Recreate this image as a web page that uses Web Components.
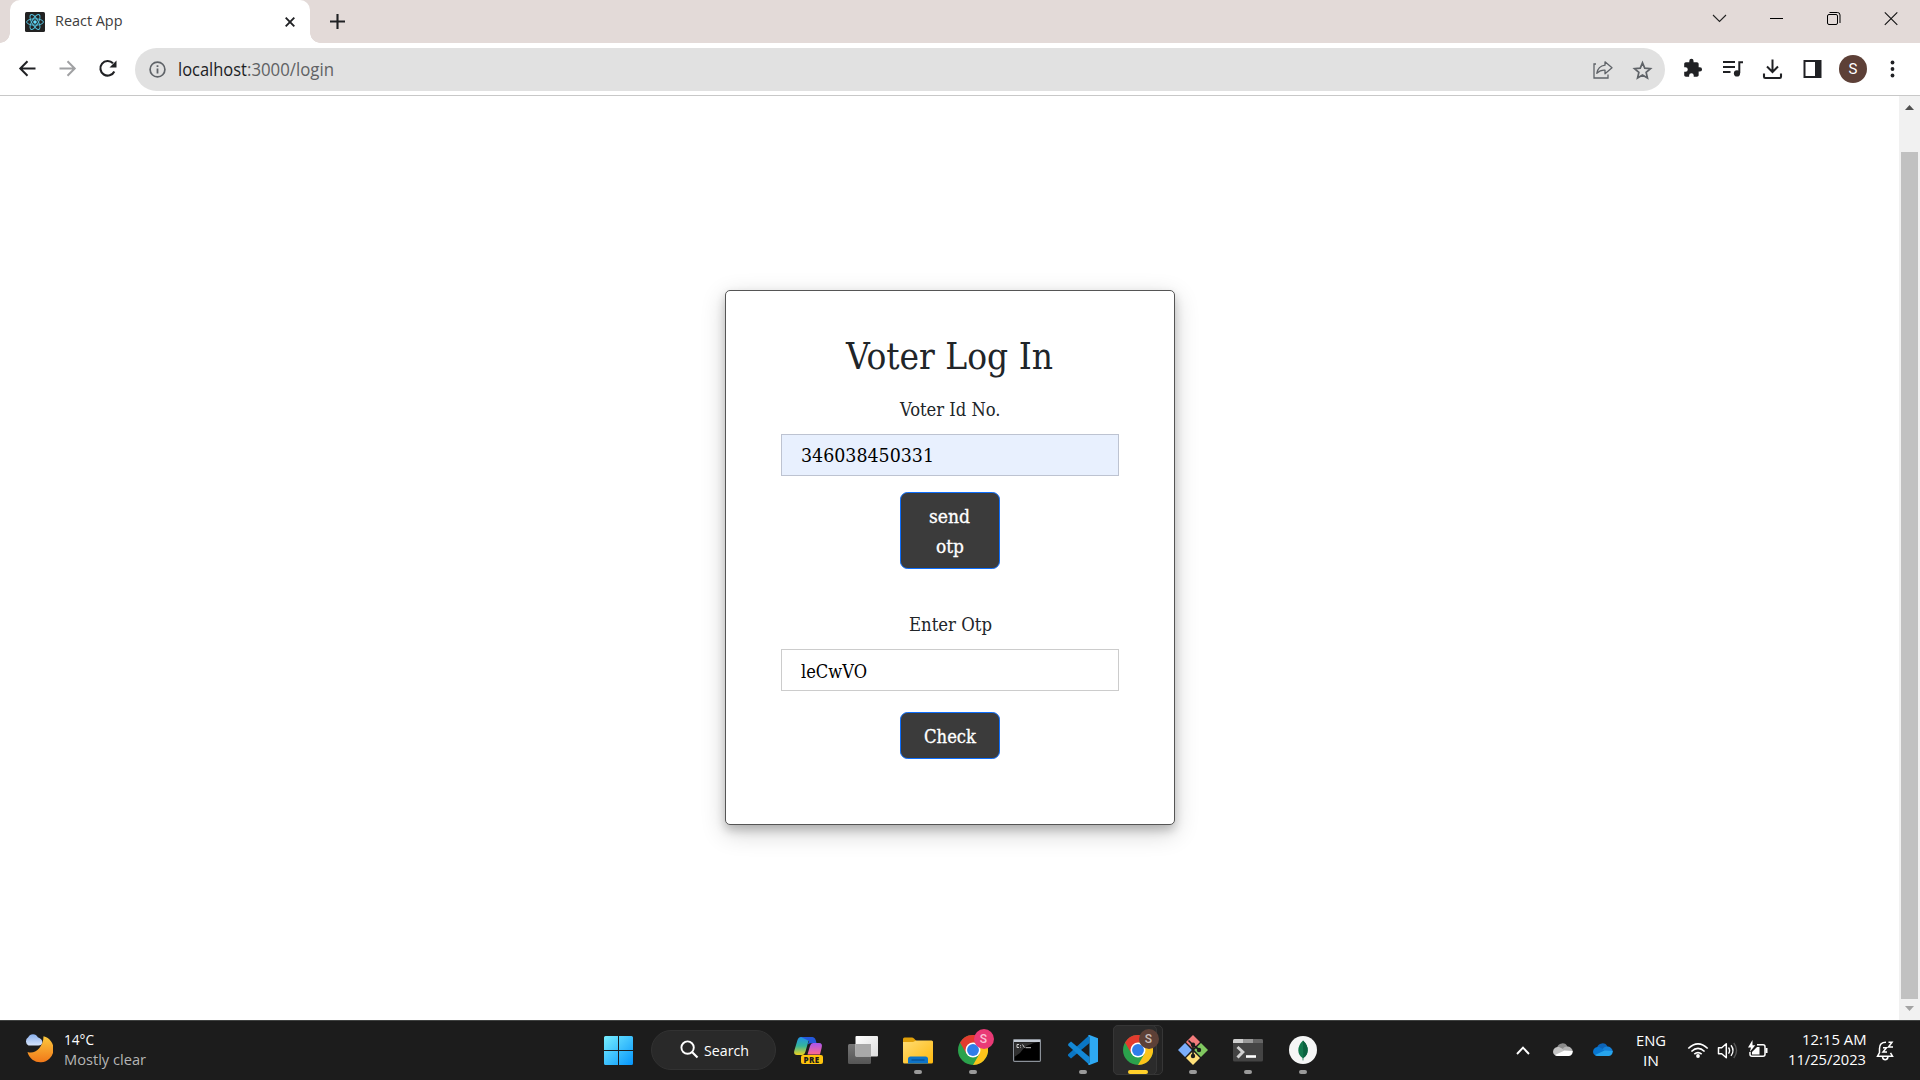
<!DOCTYPE html>
<html lang="en">
<head>
<meta charset="utf-8">
<title>React App</title>
<style>
html,body{margin:0;height:100%;overflow:hidden;background:#fff}
body{font-family:"Open Sans","Noto Sans",sans-serif}
</style>
</head>
<body>
<desktop-screen></desktop-screen>
<script>
const define = (name, html, setup) => {
  const t = document.createElement('template');
  t.innerHTML = html;
  customElements.define(name, class extends HTMLElement {
    constructor() {
      super();
      this.attachShadow({ mode: 'open' }).appendChild(t.content.cloneNode(true));
    }
    connectedCallback() { if (setup) setup(this, this.shadowRoot); }
  });
};

/* Single line of text, condensed or widened to the given width */
define('fit-text', `<style>
:host{display:block;white-space:nowrap;flex:none}
span{display:inline-block;transform-origin:0 50%;white-space:pre}
</style><span><slot></slot></span>`, (el, root) => {
  const w = parseFloat(el.getAttribute('w'));
  el.style.width = w + 'px';
  const s = root.querySelector('span');
  s.style.transform = 'scaleX(' + w / s.getBoundingClientRect().width + ')';
});

define('tab-strip', `<style>
:host{display:flex;height:43px;background:#e3dad8;justify-content:space-between}
.left{display:flex}
.tab{display:flex;align-items:center;box-sizing:border-box;width:300px;margin-left:10px;padding:0 15px;background:#fff;border-radius:10px 10px 0 0;position:relative;font-size:15px;line-height:20px;color:#3c3c3c}
.tab:before,.tab:after{content:"";position:absolute;bottom:0;width:10px;height:10px}
.tab:before{left:-10px;background:radial-gradient(circle at 0 0,transparent 9.5px,#fff 10px)}
.tab:after{right:-10px;background:radial-gradient(circle at 100% 0,transparent 9.5px,#fff 10px)}
.fav{margin-right:10px}
fit-text{margin-top:-3px}
.x{margin-left:auto}
.plus{margin:13px 0 0 19px}
.win{display:flex;align-items:flex-start;margin-right:1px}
svg{display:block;flex:none}
</style>
<div class="left"><div class="tab">
<svg class="fav" width="20" height="20" viewBox="0 0 20 20"><rect width="20" height="20" rx="1.5" fill="#222"/><g fill="none" stroke="#53c1de" stroke-width=".95"><ellipse cx="10" cy="10" rx="8.4" ry="3.2"/><ellipse cx="10" cy="10" rx="8.4" ry="3.2" transform="rotate(60 10 10)"/><ellipse cx="10" cy="10" rx="8.4" ry="3.2" transform="rotate(120 10 10)"/></g><circle cx="10" cy="10" r="1.8" fill="#61dafb"/></svg>
<fit-text w="67.5">React App</fit-text>
<svg class="x" width="10" height="10" viewBox="0 0 10 10"><path d="M.7.7l8.6 8.6M9.3.7L.7 9.3" stroke="#202124" stroke-width="1.9"/></svg>
</div>
<svg class="plus" width="17" height="17" viewBox="0 0 17 17"><path d="M8.5 1v15M1 8.500h15" stroke="#202124" stroke-width="2.1"/></svg></div>
<div class="win">
<svg width="57" height="43" viewBox="0 0 57 43"><path d="M22 15l6.500 6.500L35 15" fill="none" stroke="#222" stroke-width="1.1"/></svg>
<svg width="57" height="43" viewBox="0 0 57 43"><path d="M22 18.500h13" stroke="#000" stroke-width="1"/></svg>
<svg width="57" height="43" viewBox="0 0 57 43"><rect x="22.500" y="14.500" width="10" height="10" rx="1.500" fill="none" stroke="#000"/><path d="M24.500 12.500h8q2.500 0 2.500 2.500v8" fill="none" stroke="#000"/></svg>
<svg width="57" height="43" viewBox="0 0 57 43"><path d="M22.800 12.300l12.500 12.500M35.300 12.300L22.800 24.800" stroke="#111" stroke-width="1.1"/></svg>
</div>`);

define('browser-toolbar', `<style>
:host{display:flex;height:52px;align-items:center;background:#fff;border-bottom:1px solid #c8c8c8}
svg{display:block;flex:none}
.nav{display:flex;width:135px;flex:none;padding-left:7px;box-sizing:border-box}
.box{display:flex;align-items:center;width:1530px;height:43px;border-radius:22px;background:#e1e1e1;box-sizing:border-box;padding:0 2px 0 14px;margin-top:1px}
.url{display:flex;margin-left:12px;font-size:17.5px;line-height:24px;color:#606164;margin-top:-1px}
.host{color:#202124}
.share{margin-left:auto}
.tools{display:flex;align-items:center;margin-left:8px}
.av{width:28px;height:28px;border-radius:50%;background:#5d4037;color:#fff;font:15px/28px Roboto,sans-serif;text-align:center;margin:0 6px 0 7px}
</style>
<div class="nav">
<svg width="40" height="40" viewBox="0 0 40 40"><path d="M28.500 19.500H14M20.500 12.300L13.300 19.500l7.200 7.200" fill="none" stroke="#202124" stroke-width="2"/></svg>
<svg width="40" height="40" viewBox="0 0 40 40"><path d="M12.500 19.500H27M20.500 12.300l7.200 7.200-7.200 7.200" fill="none" stroke="#a0a1a3" stroke-width="2"/></svg>
<svg width="40" height="40" viewBox="0 0 40 40"><path d="M27.300 22.500a7.300 7.300 0 1 1-1.300-8.200" fill="none" stroke="#202124" stroke-width="2.1"/><path d="M29.500 11.500v7h-7z" fill="#202124"/></svg>
</div>
<div class="box">
<svg width="17" height="17" viewBox="0 0 17 17"><circle cx="8.500" cy="8.500" r="7.400" fill="none" stroke="#5f6368" stroke-width="1.7"/><path d="M8.500 7.500v5M8.500 4.300v1.800" stroke="#5f6368" stroke-width="1.8"/></svg>
<div class="url"><fit-text class="host" w="69">localhost</fit-text><fit-text w="87">:3000/login</fit-text></div>
<svg class="share" width="40" height="40" viewBox="0 0 40 40"><g fill="none" stroke="#5f6368" stroke-width="1.300"><path d="M13 14h-2v14h14v-3.500"/><path d="M22 11.800l7 6-7 6v-3.600q-4.500-.4-8.200 3.200 1.200-7.300 8.200-8.200z" stroke-linejoin="round"/></g></svg>
<svg width="40" height="40" viewBox="0 0 40 40"><path d="M19.500 12.800l2.250 5.300 5.750.5-4.370 3.770 1.320 5.620-4.950-3-4.950 3 1.320-5.620-4.370-3.770 5.750-.5z" fill="none" stroke="#5f6368" stroke-width="1.700"/></svg>
</div>
<div class="tools">
<svg width="40" height="40" viewBox="0 0 24 24"><path transform="translate(5.700 5.400) scale(.51)" d="M20.500 11H19V7c0-1.100-.9-2-2-2h-4V3.500a2.500 2.500 0 0 0-5 0V5H4c-1.100 0-2 .9-2 2v3.800h1.500a2.700 2.700 0 0 1 0 5.400H2V20c0 1.100.9 2 2 2h3.800v-1.500a2.700 2.700 0 0 1 5.400 0V22H17c1.100 0 2-.9 2-2v-4h1.500a2.500 2.500 0 0 0 0-5z" fill="#202124"/></svg>
<svg width="40" height="40" viewBox="0 0 40 40"><path d="M10 13h12M10 18h12M10 23h7.500M26.300 24V13.200M25.300 13.300H30" stroke="#202124" stroke-width="2" fill="none"/><circle cx="24" cy="24.400" r="3.100" fill="#202124"/></svg>
<svg width="40" height="40" viewBox="0 0 40 40"><path d="M19.500 10.500v12M14 17.500l5.500 5.500 5.500-5.500" fill="none" stroke="#202124" stroke-width="2"/><path d="M11 24.500v3.200q0 1.300 1.300 1.300h14.400q1.300 0 1.300-1.300v-3.200" fill="none" stroke="#202124" stroke-width="2.100"/></svg>
<svg width="40" height="40" viewBox="0 0 40 40"><path d="M10.500 11h18v18h-18zM12.500 13v14h9.500V13z" fill="#202124" fill-rule="evenodd"/></svg>
<div class="av" style="margin-left:6px">S</div>
<svg width="40" height="40" viewBox="0 0 40 40"><g fill="#202124"><circle cx="19.500" cy="13.500" r="1.900"/><circle cx="19.500" cy="20" r="1.900"/><circle cx="19.500" cy="26.500" r="1.900"/></g></svg>
</div>`);

define('scroll-track', `<style>
:host{display:flex;flex-direction:column;align-items:center;width:21px;background:#f1f1f1;flex:none}
.t{width:17px;height:847px;background:#c1c1c1;margin-top:42px;margin-bottom:7px}
svg{display:block;margin-top:9px}
.t+svg{margin-top:0}
</style><svg width="9" height="5" viewBox="0 0 9 5"><path d="M0 5L4.500 0 9 5z" fill="#505050"/></svg><div class="t"></div><svg width="9" height="5" viewBox="0 0 9 5"><path d="M0 0h9L4.500 5z" fill="#a3a3a3"/></svg>`);

define('form-field', `<style>
:host{display:flex;flex-direction:column;align-items:center;color:#212529;font-size:18px;line-height:30px}
.in{box-sizing:border-box;width:338px;height:42px;border:1px solid #ccc;margin-top:9px;padding-left:19px;line-height:43px;color:#000;background:#fff}
:host([filled]) .in{background:#e8f0fe;border-color:#bdc3d1;line-height:41px}
</style><slot name="label"></slot><div class="in"><slot></slot></div>`);

define('action-button', `<style>
:host{display:flex;flex-direction:column;align-items:center;box-sizing:border-box;width:100px;padding:9px 1px 6px 0;border:1px solid #0d6efd;border-radius:7.500px;background:#3b3b3b;color:#fff;font-size:18px;line-height:30px;font-weight:400;-webkit-text-stroke:.3px #fff}
</style><slot></slot>`);

define('login-card', `<style>
:host{display:flex;flex-direction:column;align-items:center;box-sizing:border-box;width:450px;height:535px;padding-top:42px;border:1px solid #555;border-radius:5px;background:#fff;box-shadow:0 5px 10px rgba(0,0,0,.2),0 7.500px 25px rgba(0,0,0,.19);font-family:"DejaVu Serif Condensed","DejaVu Serif",serif;color:#212529}
.h{font-size:37px;line-height:48px;margin-bottom:14px;padding-right:1px}
.b1{margin:16px 0 41px}
.b2{margin-top:21px}
</style>
<fit-text class="h" w="207">Voter Log In</fit-text>
<form-field filled><fit-text slot="label" w="100.5">Voter Id No.</fit-text><fit-text w="133">346038450331</fit-text></form-field>
<action-button class="b1"><fit-text w="41">send</fit-text><fit-text w="28">otp</fit-text></action-button>
<form-field><fit-text slot="label" w="83">Enter Otp</fit-text><fit-text w="66">leCwVO</fit-text></form-field>
<action-button class="b2"><fit-text w="52">Check</fit-text></action-button>`);

define('page-view', `<style>
:host{display:flex;height:924px;background:#fff}
main{flex:1;display:flex;justify-content:center;align-items:flex-start;padding:194px 0 0 1px}
</style><main><login-card></login-card></main><scroll-track></scroll-track>`);

define('task-item', `<style>
:host{display:flex;flex:none;flex-direction:column;align-items:center;width:55px;height:59px;position:relative}
.i{display:flex;align-items:center;justify-content:center;height:49px;padding-top:5px;box-sizing:border-box;margin-top:2px}
.d{display:none;width:8px;height:4px;border-radius:2px;background:#9a9a9a;margin-top:-2px}
:host([open]) .d{display:block}
:host([active]) .d{display:block;width:20px;background:#ffd02b}
:host([active]) .i,:host([active]) .d{z-index:1}
.bg,.bg2{display:none;position:absolute;top:4px;left:3px;width:44px;height:50px;border-radius:5px;background:#2b2b2b;box-sizing:border-box;border:1px solid #363636}
.bg2{width:50px;background:#242424}
:host([active]) .bg,:host([active]) .bg2{display:block}
.i{position:relative}
.d{position:relative}
</style><div class="bg2"></div><div class="bg"></div><div class="i"><slot></slot></div><div class="d"></div>`);

define('chrome-icon', `<style>
:host{display:block;position:relative;width:30px;height:30px}
svg{display:block}
b{position:absolute;left:16px;top:-6px;width:20px;height:20px;border-radius:50%;background:var(--badge);color:var(--ink);font:500 12px/20px Roboto,sans-serif;text-align:center}
</style><svg width="30" height="30" viewBox="0 0 48 48"><circle cx="24" cy="24" r="24" fill="#2ba24c"/><path d="M24 12h20.800A24 24 0 0 1 24 48l10.400-18z" fill="#fcc41a"/><path d="M3.200 12A24 24 0 0 1 44.800 12H24L13.600 30z" fill="#e33b2e"/><circle cx="24" cy="24" r="12" fill="#fff"/><circle cx="24" cy="24" r="9.500" fill="#2f7de9"/></svg><b>S</b>`);

define('system-tray', `<style>
:host{display:flex;align-items:flex-start;color:#fff;font-size:15px;line-height:20px}
svg{display:block;flex:none}
.c{display:flex;flex-direction:column;margin-top:8px;flex:none}
</style>
<svg width="30" height="59" viewBox="0 0 30 59"><path d="M9 33l6-6.300 6 6.300" fill="none" stroke="#fff" stroke-width="1.900"/></svg>
<svg style="margin-left:8px" width="40" height="59" viewBox="0 0 40 59"><g transform="translate(7 22)"><path d="M4 5a5.500 5.500 0 0 1 10.500-1.300L9 8z" fill="#8b8b8b"/><path d="M0 9a5 5 0 0 1 6-5l8 4-9 5A4.600 4.600 0 0 1 0 9z" fill="#c4c4c4"/><path d="M9.500 6.500Q11 3 15 3.500t5 5.500L16 10z" fill="#b3b3b3"/><path d="M2 12l9.500-4.500 8 .5A4 4 0 0 1 16 13H5q-2 0-3-1z" fill="#fff"/></g></svg>
<svg width="40" height="59" viewBox="0 0 40 59"><g transform="translate(7 22)"><path d="M4 5a5.500 5.500 0 0 1 10.500-1.300L9 8z" fill="#0d64b8"/><path d="M0 9a5 5 0 0 1 6-5l8 4-9 5A4.600 4.600 0 0 1 0 9z" fill="#0876d0"/><path d="M9.500 6.500Q11 3 15 3.500t5 5.500L16 10z" fill="#1581d8"/><path d="M2 12l9.500-4.500 8 .5A4 4 0 0 1 16 13H5q-2 0-3-1z" fill="#27a4ec"/></g></svg>
<div class="c" style="align-items:center;width:30px;margin-left:10px;margin-top:9px"><fit-text w="30">ENG</fit-text><fit-text w="16">IN</fit-text></div>
<svg style="margin-left:21px" width="22" height="59" viewBox="0 0 22 59"><g fill="none" stroke="#fff" stroke-width="1.600"><path d="M1.300 27.500q9.700-9.300 19.400 0M4.400 30.500q6.600-6.200 13.200 0M7.300 33.200q3.700-3.200 7.400 0"/></g><circle cx="11" cy="35" r="1.900" fill="#fff"/></svg>
<svg style="margin-left:8px" width="22" height="59" viewBox="0 0 22 59"><path d="M1.500 26.700h3.200l4.600-4v14l-4.600-4H1.500z" fill="none" stroke="#fff" stroke-width="1.500" stroke-linejoin="round"/><path d="M11.500 26.500q2.200 3 0 6.200M14 24.300q4 5.200 0 10.600" fill="none" stroke="#fff" stroke-width="1.400"/><path d="M16.800 22q5.500 7.500 0 15" fill="none" stroke="#555" stroke-width="1.400"/></svg>
<svg style="margin-left:8px" width="24" height="59" viewBox="0 0 24 59"><path d="M10 23.700h6q2 0 2 2v7.500q0 2-2 2H5q-2 0-2-2V31" fill="none" stroke="#fff" stroke-width="1.500"/><path d="M5 33v-2l5-5h2.500v7.500H5zM18.500 27h2v5h-2zM5.500 19L1 26.500h3L2.800 31 8.300 24.300H5.500z" fill="#fff"/></svg>
<div class="c" style="align-items:flex-end;width:77px;margin-left:18px"><fit-text w="64.5">12:15 AM</fit-text><fit-text w="78">11/25/2023</fit-text></div>
<svg style="margin-left:9px" width="22" height="59" viewBox="0 0 22 59"><path d="M11 21.300q-6.500 0-6.500 6.200v4L2.500 35.300h15l-2-3.500M7.500 36q.5 2.700 2.700 2.700t2.800-2.700" fill="none" stroke="#fff" stroke-width="1.500"/><path d="M8 26.700h3.500L8 31h4M13.500 21.300H17L13.500 26H18" fill="none" stroke="#fff" stroke-width="1.500"/></svg>`);

define('task-bar', `<style>
:host{display:flex;box-sizing:border-box;height:60px;border-top:1px solid #3f4140;background:#1c1c1c;color:#fff;font-size:15px;line-height:20px}
svg{display:block;flex:none}
.w{display:flex;width:591px;flex:none;padding:9px 0 0 23px;box-sizing:border-box}
.wt{display:flex;flex-direction:column;margin:-1px 0 0 11px}
.wt .m{color:#b5b5b5}
.s{display:flex;align-items:center;box-sizing:border-box;width:125px;height:40px;border-radius:20px;background:#292929;border:1px solid #323232;margin:9px 4px 0 5px;padding:0 0 1px 28px;flex:none}
.s fit-text{margin-left:5px}
.pre{position:relative;margin-left:1px}
.pre b{position:absolute;left:7px;top:19px;width:22px;height:9px;border-radius:2px;background:#ffc40c;color:#1c1c1c;font:800 8px/9px "Open Sans",sans-serif;text-align:center;letter-spacing:.4px}
system-tray{margin-left:auto;margin-right:23px}
</style>
<div class="w">
<svg width="30" height="40" viewBox="0 0 30 40"><defs><linearGradient id="m" x2="0" y2="1"><stop stop-color="#fcc93d"/><stop offset="1" stop-color="#f17819"/></linearGradient><linearGradient id="c" x2="0" y2="1"><stop stop-color="#8ab0ed"/><stop offset="1" stop-color="#d7e4fa"/></linearGradient></defs><path d="M20.500 6.300A13.200 13.200 0 1 1 4.500 22Q11 24 16 18.500 20.500 13 20.500 6.300z" fill="url(#m)"/><path d="M5.500 15.500a4.700 4.700 0 0 1-.3-8.200 5.300 5.300 0 0 1 9.600 0q4.500 1.500 4.500 5-.5 3.200-3.800 3.200z" fill="url(#c)"/></svg>
<div class="wt"><fit-text w="30">14°C</fit-text><fit-text class="m" w="82">Mostly clear</fit-text></div></div>
<task-item><svg width="29" height="29" viewBox="0 0 29 29"><defs><linearGradient id="g" gradientUnits="userSpaceOnUse" x1="0" y1="0" x2="29" y2="29"><stop stop-color="#77eeff"/><stop offset="1" stop-color="#0595fb"/></linearGradient></defs><path d="M1.500 0H14v14H0V1.500Q0 0 1.500 0zM15 0h12.500Q29 0 29 1.500V14H15zM0 15h14v14H1.500Q0 29 0 27.500zM15 15h14v12.500q0 1.500-1.500 1.500H15z" fill="url(#g)"/></svg></task-item>
<div class="s"><svg width="19" height="19" viewBox="0 0 19 19"><circle cx="7.600" cy="7.600" r="6.200" fill="none" stroke="#fff" stroke-width="1.900"/><path d="M12 12l5.500 5.500" stroke="#fff" stroke-width="2.100"/></svg><fit-text w="45">Search</fit-text></div>
<task-item><div class="pre"><svg width="29" height="28" viewBox="0 0 29 28"><defs><linearGradient id="p1" x2="0" y2="1"><stop stop-color="#2292e8"/><stop offset=".5" stop-color="#35b59a"/><stop offset="1" stop-color="#efd21d"/></linearGradient><linearGradient id="p2" x2="0" y2="1"><stop stop-color="#a755ef"/><stop offset="1" stop-color="#ff6a8c"/></linearGradient></defs><path d="M7 1h11.500q-3 .5-4 4l-3 10.500Q10.500 19 8 19H3q-4 0-2.500-5L3.500 4Q4.500 1 7 1z" fill="url(#p1)"/><path d="M7 1h11.500q3 0 4 6h-4.500q-3 0-4.200 1.500L15 5z" fill="#2458db"/><path d="M19 7h6q4 0 2.600 5L26 18.500H13.500L16 10q.8-3 3-3z" fill="url(#p2)"/></svg><b>PRE</b></div></task-item>
<task-item><svg width="30" height="28" viewBox="0 0 30 28"><defs><linearGradient id="t1" x2="1" y2="1"><stop stop-color="#fff"/><stop offset="1" stop-color="#dcdcdc"/></linearGradient><linearGradient id="t2" x2="0" y2="1"><stop stop-color="#777"/><stop offset="1" stop-color="#555"/></linearGradient></defs><rect y="8" width="23" height="20" rx="1.500" fill="url(#t2)"/><rect x="7.500" width="22.500" height="20.500" rx="1" fill="url(#t1)"/><path d="M7.500 8H23v12.500H7.500z" fill="#a9a9a9"/></svg></task-item>
<task-item open><svg width="30" height="27" viewBox="0 0 30 27"><defs><linearGradient id="f" x2="1" y2="1"><stop stop-color="#ffdc73"/><stop offset="1" stop-color="#ffb90d"/></linearGradient></defs><path d="M0 2Q0 .500 1.500.500H9q1 0 2 1L13.500 4H28.500Q30 4 30 5.500V15H0z" fill="#e0a009"/><path d="M0 5h10l3-1.500h15.500q1.500 0 1.500 1.500v20q0 1.500-1.500 1.500h-27Q0 26.500 0 25z" fill="url(#f)"/><path d="M5 26.500V22q0-2.500 2.500-2.500h15Q25 19.500 25 22v4.500z" fill="#0e74c8"/><path d="M8.500 23h13" stroke="#084d91" stroke-width="1.200"/></svg></task-item>
<task-item open><chrome-icon style="--badge:#e93a76;--ink:#fbc1d5"></chrome-icon></task-item>
<task-item><svg width="28" height="23" viewBox="0 0 28 23" style="margin-right:1px"><rect x=".6" y=".6" width="26.800" height="21.800" rx=".8" fill="#000" stroke="#8b9199" stroke-width="1.200"/><path d="M1 1h26v2H1z" fill="#c4cbd4"/><path d="M1.300 3.300H26Q13 4.500 7 14L1.300 18z" fill="#303030"/><path d="M6 5.500H4v3h2M7.500 6v.8M7.500 7.800v.8M9.500 5.500l2 3.200M12.500 8.700H18" stroke="#ddd" fill="none" stroke-width=".9"/></svg></task-item>
<task-item open><svg width="30" height="30" viewBox="0 0 30 30"><path d="M21.500 8L3 23.500 0 20.800v-1.300L21.500 0z" fill="#0a76c4"/><path d="M21.500 22L3 6.500.2 9v1.500L21.500 30z" fill="#1388d6"/><path d="M21.500 0L30 3.200v23.600L21.500 30q-1 0-1.500-.7l1.500-1.500V2L20 .700q.5-.7 1.500-.7z" fill="#2ea9f3"/></svg></task-item>
<task-item active><chrome-icon style="--badge:#5d4037;--ink:#c9bdb8"></chrome-icon></task-item>
<task-item open><svg width="30" height="30" viewBox="0 0 30 30"><path d="M15 0l7.500 7.500L15 14 7.500 7.500z" fill="#f37c7c"/><path d="M30 15l-7.500 7.500L16 15l6.500-7.500z" fill="#80c860"/><path d="M15 30l-7.500-7.500L15 16l7.500 6.500z" fill="#ffe07a"/><path d="M0 15l7.500-7.500L14 15l-6.500 7.500z" fill="#7aaefb"/><path d="M6.800 6.800l16.400 16.400M23.200 6.800L6.800 23.200" stroke="#1c1c1c" stroke-width="1.300"/><path d="M10.500 5.500L15 10v11M15 10l6.500 5" fill="none" stroke="#1c1c1c" stroke-width="1.700"/><circle cx="15" cy="9.800" r="2.200" fill="#1c1c1c"/><circle cx="21" cy="15" r="2.200" fill="#1c1c1c"/><circle cx="15" cy="21" r="2.200" fill="#1c1c1c"/></svg></task-item>
<task-item open><svg width="30" height="23" viewBox="0 0 30 23"><rect width="30" height="22.500" rx="1.500" fill="#444"/><path d="M1.500 0H10v4H0V1.500Q0 0 1.500 0z" fill="#cfcfcf"/><path d="M10 0h10v4H10z" fill="#999"/><path d="M20 0h8.500Q30 0 30 1.500V4H20z" fill="#666"/><path d="M4.500 8l5.300 5-5.300 5.500" fill="none" stroke="#d0d0d0" stroke-width="3"/><path d="M13 17.500h10" stroke="#fff" stroke-width="2.600"/></svg></task-item>
<task-item open><svg width="28" height="28" viewBox="0 0 28 28"><circle cx="14" cy="14" r="14" fill="#f5f6f6"/><path d="M14 4.500q5 4.500 4.700 10Q18.500 19 14.500 22l-.2 2.500h-.6l-.2-2.500Q9.500 19 9.300 14.500 9.200 9 14 4.500z" fill="#13794e"/><path d="M14 4.500q5 4.500 4.700 10Q18.500 19 14.300 22z" fill="#0b6240"/></svg></task-item>
<system-tray></system-tray>`);

define('desktop-screen', `<style>
:host{display:flex;flex-direction:column;width:1920px;height:1080px;overflow:hidden}
</style><tab-strip></tab-strip><browser-toolbar></browser-toolbar><page-view></page-view><task-bar></task-bar>`);
</script>
</body>
</html>
